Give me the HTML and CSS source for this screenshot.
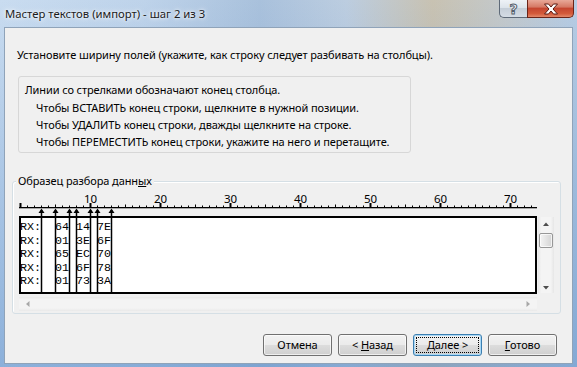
FILE: index.html
```html
<!DOCTYPE html>
<html lang="ru">

<head>
    <meta charset="UTF-8">
    <meta name="viewport" content="width=device-width, initial-scale=1.0">
    <title>Мастер текстов (импорт) - шаг 2 из 3</title>
    <link rel="stylesheet" href="styles.css">
</head>

<body>

    <div class="window">
        <div class="titlebar">
            <span class="title">Мастер текстов (импорт) - шаг 2 из 3</span>
            <div class="caption-buttons">
                <div class="cap-btn help">?</div>
                <div class="cap-btn close">
                    <svg width="16" height="12" viewBox="0 0 16 12">
                        <path d="M1.5 1 H5.5 L8 4 L10.5 1 H14.5 L10 6 L14.5 11 H10.5 L8 8 L5.5 11 H1.5 L6 6 Z"
                            fill="#fff" stroke="#5a1a12" stroke-width="1" stroke-linejoin="round" />
                    </svg>
                </div>
            </div>
        </div>

        <div class="client">
            <p class="lead">Установите ширину полей (укажите, как строку следует разбивать на столбцы).</p>

            <div class="note">
                <div class="note-head">Линии со стрелками обозначают конец столбца.</div>
                <div class="note-line">Чтобы ВСТАВИТЬ конец строки, щелкните в нужной позиции.</div>
                <div class="note-line">Чтобы УДАЛИТЬ конец строки, дважды щелкните на строке.</div>
                <div class="note-line">Чтобы ПЕРЕМЕСТИТЬ конец строки, укажите на него и перетащите.</div>
            </div>

            <div class="group">
                <span class="group-label">Образец разбора данн<u>ы</u>х</span>

                <div class="preview">
                    <svg class="ruler" id="ruler" width="518" height="25"></svg>

                    <div class="data-row">
                        <div class="data-box">
<pre class="data">RX:  64 14 7E
RX:  01 3E 6F
RX:  65 EC 70
RX:  01 6F 78
RX:  01 73 3A</pre>
                        </div>
                        <div class="vscroll">
                            <svg width="16" height="76" viewBox="0 0 16 76">
                                <path d="M5 9 L11 9 L8 5.5 Z" fill="#4d4d4d" />
                                <path d="M5 69 L11 69 L8 72.5 Z" fill="#4d4d4d" />
                            </svg>
                            <div class="thumb"></div>
                        </div>
                    </div>

                    <div class="hscroll">
                        <svg width="8" height="8" viewBox="0 0 8 8"><path d="M5.5 1 L5.5 7 L2 4 Z" fill="#a8a8a8" /></svg>
                        <svg width="8" height="8" viewBox="0 0 8 8"><path d="M2.5 1 L2.5 7 L6 4 Z" fill="#a8a8a8" /></svg>
                    </div>

                    <svg class="breaks" id="breaks" width="518" height="103"></svg>
                </div>
            </div>

            <div class="buttons">
                <div class="btn"><span>Отмена</span></div>
                <div class="btn"><span>&lt; <u>Н</u>азад</span></div>
                <div class="btn default"><span><u>Д</u>алее &gt;</span></div>
                <div class="btn"><span><u>Г</u>отово</span></div>
            </div>
        </div>
    </div>

    <script>
        const charWidth = 7;

        // Ruler: one tick per character, labels every 10
        const ruler = document.getElementById('ruler');
        let rulerSvg = '<rect x="0" y="16" width="518" height="1.3" fill="#000"/>';
        for (let n = 0; n <= 73; n++) {
            const x = 1 + n * charWidth;
            if (n % 10 === 0) {
                rulerSvg += `<rect x="${x - 0.5}" y="12" width="2" height="5" fill="#000"/>`;
                if (n > 0) {
                    rulerSvg += `<text x="${x + 0.5}" y="12" text-anchor="middle" class="ruler-num">${n}</text>`;
                }
            } else if (n % 5 === 0) {
                rulerSvg += `<rect x="${x}" y="13.5" width="1" height="3" fill="#000"/>`;
            } else {
                rulerSvg += `<rect x="${x}" y="14.5" width="1" height="2" fill="#000"/>`;
            }
        }
        ruler.innerHTML = rulerSvg;

        // Column break lines with arrows
        const breaks = [3, 5, 7, 8, 10, 11, 13];
        const breaksSvg = document.getElementById('breaks');
        let breakMarkup = '';
        breaks.forEach(n => {
            const x = 1 + n * charWidth;
            breakMarkup += `<rect x="${x - 0.25}" y="19" width="1.5" height="83" fill="#000"/>`;
            breakMarkup += `<path d="M${x + 0.5} 17.5 L${x + 3.5} 22 L${x - 2.5} 22 Z" fill="#000"/>`;
        });
        breaksSvg.innerHTML = breakMarkup;
    </script>

</body>

</html>
```

FILE: styles.css
```css
body {
    margin: 0;
    padding: 0;
    font-family: "Noto Sans", "Open Sans", sans-serif;
    font-size: 11px;
    letter-spacing: -0.1px;
    color: #000;
}

.window {
    width: 577px;
    height: 367px;
    box-sizing: border-box;
    padding: 0 4px 3px 4px;
    display: flex;
    flex-direction: column;
    background:
        linear-gradient(to bottom, rgba(255, 255, 255, 0) 0, rgba(90, 140, 200, 0.55) 100%),
        linear-gradient(to right, #c9dcf0 0%, #bed3ea 25%, #a9c1dc 45%, #bccde0 60%, #c8c2b2 75%, #c3c9cc 88%, #b6cce4 100%);
}

/* title bar */

.titlebar {
    height: 27px;
    flex-shrink: 0;
    display: flex;
    align-items: flex-start;
    margin: 0 -4px;
}

.title {
    padding: 6px 0 0 5px;
    font-size: 11.3px;
    letter-spacing: 0;
    line-height: 16px;
    color: #1b1b1b;
    text-shadow: 0 0 6px #fff, 0 0 3px #fff;
}

.caption-buttons {
    margin-left: auto;
    margin-right: 3px;
    display: flex;
}

.cap-btn {
    height: 18px;
    box-sizing: border-box;
    display: flex;
    align-items: center;
    justify-content: center;
    border: 1px solid #5e6a78;
    border-top: none;
}

.help {
    width: 28px;
    border-right: none;
    border-bottom-left-radius: 5px;
    background: linear-gradient(to bottom, #eef2f6 0%, #dde4eb 45%, #c5ced8 50%, #d4dce4 100%);
    font-family: "DejaVu Sans", sans-serif;
    font-weight: bold;
    font-size: 14px;
    color: #eef2f6;
    -webkit-text-stroke: 1px #56606c;
}

.close {
    width: 47px;
    border-color: #6a2418;
    border-bottom-right-radius: 5px;
    background: linear-gradient(to bottom, #e8a898 0%, #d67a66 40%, #c54630 50%, #d35a3a 80%, #e3886a 100%);
}

/* client area */

.client {
    flex: 1;
    background-color: #f0f0f0;
    border: 1px solid #8fa3b9;
    display: flex;
    flex-direction: column;
    padding-left: 7px;
}

.lead {
    margin: 18px 0 0 5px;
    line-height: 17px;
}

.note {
    margin: 13px 0 0 6px;
    width: 393px;
    height: 77px;
    box-sizing: border-box;
    border: 1px solid #d7d7d7;
    border-radius: 3px;
    padding: 4px 0 0 6px;
    line-height: 17px;
}

.note-head {
    margin-bottom: 1px;
}

.note-line {
    padding-left: 11px;
}

/* group box */

.group {
    position: relative;
    margin-top: 28px;
    width: 549px;
    height: 133px;
    box-sizing: border-box;
    border: 1px solid #d5dfe5;
    border-radius: 3px;
    box-shadow: inset 1px 1px 0 #fff;
    padding: 9px 0 0 6px;
}

.group-label {
    position: absolute;
    top: -9px;
    left: 3px;
    padding: 0 2px;
    line-height: 16px;
    background-color: #f0f0f0;
}

.preview {
    position: relative;
    width: 535px;
}

.ruler {
    display: block;
}

.ruler-num {
    font-family: "Noto Sans", sans-serif;
    font-size: 11.5px;
    letter-spacing: 0;
    fill: #000;
}

.breaks {
    position: absolute;
    top: 0;
    left: 0;
}

.data-row {
    display: flex;
}

.data-box {
    width: 518px;
    height: 78px;
    box-sizing: border-box;
    border: 2px solid #000;
    background-color: #fff;
    overflow: hidden;
}

.data {
    margin: 3px 0 0 -1px;
    font-family: "Liberation Mono", "Courier New", monospace;
    font-size: 11.667px;
    letter-spacing: 0;
    line-height: 13.6px;
    color: #000;
}

.vscroll {
    position: relative;
    margin: 1px 0 0 1px;
    width: 16px;
    height: 76px;
    background: linear-gradient(to right, #e6e6e6, #f4f4f4 20%, #f4f4f4 80%, #e6e6e6);
}

.vscroll svg {
    display: block;
}

.thumb {
    position: absolute;
    top: 16px;
    left: 1px;
    width: 14px;
    height: 15px;
    box-sizing: border-box;
    border: 1px solid #979797;
    border-radius: 2px;
    background: linear-gradient(to right, #f4f4f4, #e4e4e4 50%, #d4d4d4);
    box-shadow: inset 0 0 0 1px rgba(255, 255, 255, 0.7);
}

.hscroll {
    margin-top: 3px;
    width: 518px;
    height: 14px;
    box-sizing: border-box;
    padding: 0 5px 0 5px;
    display: flex;
    align-items: center;
    justify-content: space-between;
    background: linear-gradient(to bottom, #e9e9e9, #f4f4f4 20%, #f4f4f4 80%, #e9e9e9);
}

.hscroll svg {
    display: block;
}

/* dialog buttons */

.buttons {
    margin-top: 20px;
    display: flex;
    justify-content: flex-end;
    gap: 6px;
    padding-right: 15px;
}

.btn {
    position: relative;
    width: 69px;
    height: 22px;
    box-sizing: border-box;
    border: 1px solid #707070;
    border-radius: 3px;
    background: linear-gradient(to bottom, #f2f2f2 0%, #ebebeb 48%, #dddddd 50%, #cfcfcf 100%);
    box-shadow: inset 0 0 0 1px rgba(255, 255, 255, 0.65);
    display: flex;
    align-items: center;
    justify-content: center;
    line-height: 16px;
}

.btn.default {
    border-color: #3c7fb1;
    box-shadow: inset 0 0 0 1px #a8d8f6;
}

.btn.default::after {
    content: "";
    position: absolute;
    top: 2px;
    left: 2px;
    right: 2px;
    bottom: 2px;
    border: 1px dotted #000;
}
```
